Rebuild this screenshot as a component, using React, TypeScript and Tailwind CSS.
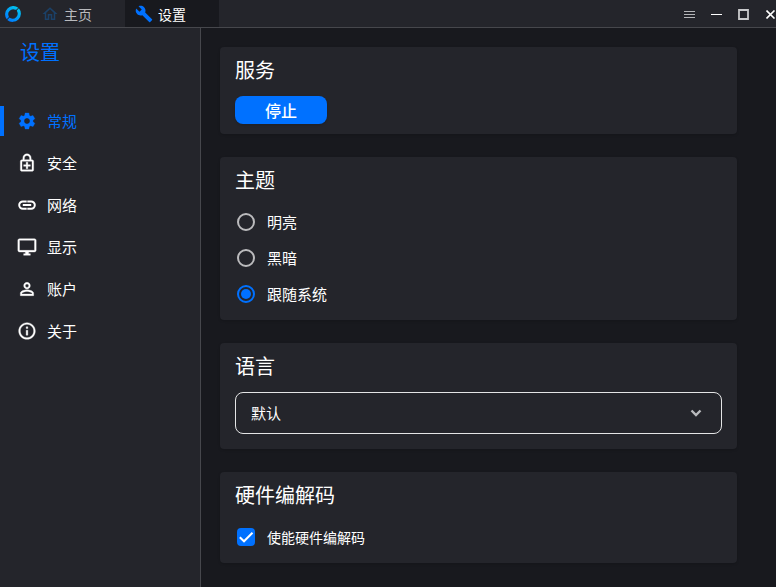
import { useState } from "react";
import type { ComponentType, ReactNode } from "react";
import {
  MdBuild,
  MdInfoOutline,
  MdOutlineDesktopWindows,
  MdOutlineEnhancedEncryption,
  MdOutlineHome,
  MdPersonOutline,
  MdSettings,
} from "react-icons/md";

function LinkIcon({ className }: { className?: string }) {
  return (
    <svg viewBox="0 0 20 20" className={className} fill="none" aria-hidden="true">
      <path
        stroke="currentColor"
        strokeWidth="2"
        d="M9.700 6.400H5.900a3.700 3.700 0 0 0 0 7.400H9.700M10.300 6.400h3.800a3.700 3.700 0 0 1 0 7.400H10.300M5.800 10.100h8.400"
      />
    </svg>
  );
}

const NAV: { id: string; label: string; icon: ComponentType<{ className?: string }> }[] = [
  { id: "general", label: "常规", icon: MdSettings },
  { id: "security", label: "安全", icon: MdOutlineEnhancedEncryption },
  { id: "network", label: "网络", icon: LinkIcon },
  { id: "display", label: "显示", icon: MdOutlineDesktopWindows },
  { id: "account", label: "账户", icon: MdPersonOutline },
  { id: "about", label: "关于", icon: MdInfoOutline },
];

const THEMES = [
  { id: "light", label: "明亮" },
  { id: "dark", label: "黑暗" },
  { id: "system", label: "跟随系统" },
];

function Logo() {
  return (
    <svg viewBox="0 0 18 18" className="size-[18px]" fill="none" aria-hidden="true">
      <defs>
        <linearGradient id="logo" x1="14" y1="2" x2="4" y2="16" gradientUnits="userSpaceOnUse">
          <stop stopColor="#00c8f0" />
          <stop offset="1" stopColor="#0078ff" />
        </linearGradient>
      </defs>
      <path
        fill="url(#logo)"
        d="M14.9 3.2 13.2 4.9c-.4.4-.4.8-.2 1.300a5 5 0 0 1-6.800 6.800c-.500-.2-.9-.2-1.300.2L3.200 14.900A8.300 8.300 0 0 0 14.900 3.200ZM14.300 2.700A8.300 8.300 0 0 0 2.700 14.300l1.800-1.800c.400-.400.400-.8.2-1.200A5 5 0 0 1 11.300 4.700c.400.2.800.2 1.200-.2Z"
      />
    </svg>
  );
}

function TitleBar() {
  return (
    <header className="flex h-7 shrink-0 items-stretch overflow-hidden border-b border-[#46474c] bg-[#24252b]">
      <div className="flex w-[33px] items-center pl-1">
        <Logo />
      </div>
      <nav className="flex">
        <button className="flex w-[92px] items-center gap-[5px] pl-2 text-sm text-[#b9babd]">
          <MdOutlineHome className="size-[18px] text-[#1b4168]" />
          主页
        </button>
        <button className="flex w-[94px] items-center gap-[5px] bg-[#18191e] pl-2.5 text-sm text-white">
          <MdBuild className="size-[18px] text-[#0071ff]" />
          设置
        </button>
      </nav>

      {/* window controls */}
      <div className="ml-auto flex pt-0.5 text-white">
        <button aria-label="菜单" className="flex w-[27px] items-center justify-center">
          <svg viewBox="0 0 11 11" className="size-[11px]" stroke="#b5b6b9" aria-hidden="true">
            <path d="M0 2.500h11M0 5.500h11M0 8.500h11" />
          </svg>
        </button>
        <button aria-label="最小化" className="flex w-[27px] items-center justify-center">
          <svg viewBox="0 0 11 11" className="size-[11px]" stroke="currentColor" aria-hidden="true">
            <path d="M0 5.500h11" />
          </svg>
        </button>
        <button aria-label="最大化" className="flex w-[27px] items-center justify-center">
          <svg viewBox="0 0 11 11" className="size-[11px]" fill="none" stroke="#c9cacc" aria-hidden="true">
            <path strokeWidth="1.800" d="M1 1h9v9H1z" />
          </svg>
        </button>
        <button aria-label="关闭" className="flex w-[19px] items-center justify-end">
          <svg viewBox="0 0 10 9" className="h-[9px] w-2.5" stroke="currentColor" strokeWidth="1.600" aria-hidden="true">
            <path d="M.5.500l8 8M8.500.500l-8 8" />
          </svg>
        </button>
      </div>
    </header>
  );
}

function Card({ title, className, children }: { title: string; className: string; children: ReactNode }) {
  return (
    <section className={`flex flex-col rounded bg-[#24252b] px-[15px] pt-2 shadow-sm ${className}`}>
      <h2 className="text-xl leading-[30px]">{title}</h2>
      {children}
    </section>
  );
}

export default function App() {
  const [page, setPage] = useState("general");
  const [theme, setTheme] = useState("system");
  const [running, setRunning] = useState(true);
  const [hwCodec, setHwCodec] = useState(true);

  return (
    <div className="flex min-h-screen flex-col bg-[#18191e] font-['Noto_Sans_CJK_SC',sans-serif] text-white">
      <TitleBar />
      <div className="flex grow">
        {/* SIDEBAR */}
        <aside className="w-[201px] shrink-0 border-r border-[#46474c] bg-[#24252b]">
          <h1 className="px-5 pt-2 text-xl leading-8 text-[#0071ff]">设置</h1>
          <nav className="mt-8">
            {NAV.map(({ id, label, icon: Icon }) => (
              <button
                key={id}
                onClick={() => setPage(id)}
                className={`flex h-[42px] w-full items-center text-[15px] ${page === id ? "text-[#0071ff]" : "text-white"}`}
              >
                <span className={`h-[30px] w-1 ${page === id ? "bg-[#0071ff]" : ""}`} />
                <span className="ml-3 flex w-[22px] justify-center">
                  {/* thin extra stroke, kept off the transparent bounding box */}
                  <Icon className="size-5 stroke-current stroke-[0.4] [&>path[fill=none]]:stroke-none" />
                </span>
                <span className="ml-[9px]">{label}</span>
              </button>
            ))}
          </nav>
        </aside>

        {/* CONTENT */}
        <main className="flex grow flex-col gap-[23px] pt-[19px] pr-[39px] pb-6 pl-[19px]">
          <Card title="服务" className="gap-[11px] pb-2.5">
            <button
              onClick={() => setRunning(!running)}
              className="h-7 w-[92px] rounded-lg bg-[#0071ff] leading-6 font-medium shadow"
            >
              {running ? "停止" : "启动"}
            </button>
          </Card>

          <Card title="主题" className="gap-[9px] pb-2">
            <div>
              {THEMES.map((t) => (
                <label key={t.id} className="flex h-9 items-center gap-3 pl-0.5 text-[15px]">
                  <input
                    type="radio"
                    name="theme"
                    checked={theme === t.id}
                    onChange={() => setTheme(t.id)}
                    className="grid size-[18px] appearance-none place-content-center rounded-full border-2 border-[#bbbbbd] before:size-2.5 before:rounded-full checked:border-[#0071ff] checked:before:bg-[#0071ff]"
                  />
                  {t.label}
                </label>
              ))}
            </div>
          </Card>

          <Card title="语言" className="gap-[11px] pb-[15px]">
            <div className="relative">
              <select
                aria-label="语言"
                className="h-[42px] w-full appearance-none rounded-lg border border-[#e4e5e6] bg-transparent px-[15px] text-[15px]"
              >
                <option>默认</option>
              </select>
              <svg
                viewBox="0 0 12 8"
                className="pointer-events-none absolute top-[17px] right-5 h-2 w-3"
                fill="none"
                stroke="#b9babd"
                strokeWidth="2.400"
                aria-hidden="true"
              >
                <path d="M1.500 1.500 6 6l4.500-4.500" />
              </svg>
            </div>
          </Card>

          <Card title="硬件编解码" className="gap-[9px] pb-2">
            <label className="flex h-9 items-center gap-3 pl-0.5 text-sm">
              <span className="relative flex">
                <input
                  type="checkbox"
                  checked={hwCodec}
                  onChange={() => setHwCodec(!hwCodec)}
                  className="size-[18px] appearance-none rounded border-2 border-[#bbbbbd] checked:border-[#0071ff] checked:bg-[#0071ff]"
                />
                {hwCodec && (
                  <svg
                    viewBox="0 0 18 18"
                    className="pointer-events-none absolute inset-0"
                    fill="none"
                    stroke="white"
                    strokeWidth="2"
                    aria-hidden="true"
                  >
                    <path d="M2.800 9.300 7 13.300 15.500 4.700" />
                  </svg>
                )}
              </span>
              使能硬件编解码
            </label>
          </Card>
        </main>
      </div>
    </div>
  );
}
